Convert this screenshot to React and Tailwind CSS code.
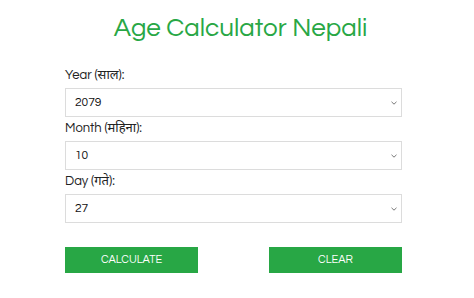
import React from "react";

const font = { fontFamily: '"Questrial", "Liberation Sans", "Noto Sans", sans-serif' };

function Chevron() {
  return (
    <svg width="6" height="4" viewBox="0 0 6 4" className="shrink-0">
      <path d="M0.5 0.8 L3 3.2 L5.5 0.8" fill="none" stroke="#777" strokeWidth="1" />
    </svg>
  );
}

function Field({ label, value }) {
  return (
    <div className="flex flex-col">
      <div className="h-[24px] flex items-center text-[13px] text-[#222]">{label}</div>
      <div className="h-[29px] border border-[#dcdcdc] bg-white flex items-center justify-between pl-[9px] pr-[4px] text-[12px] text-[#111]">
        <span>{value}</span>
        <Chevron />
      </div>
    </div>
  );
}

export default function App() {
  return (
    <div className="w-[474px] h-[298px] bg-white" style={font}>
      <div className="pt-[13px] h-[64px] text-center">
        <div className="text-[26px] leading-[30px] text-[#28a745] pl-[7px]">Age Calculator Nepali</div>
      </div>
      <div className="ml-[65px] w-[337px] flex flex-col">
        <Field label="Year (साल):" value="2079" />
        <Field label="Month (महिना):" value="10" />
        <Field label="Day (गते):" value="27" />
        <div className="mt-[24px] flex justify-between">
          <button className="w-[133px] h-[26px] bg-[#28a745] text-white text-[11px] uppercase flex items-center justify-center">Calculate</button>
          <button className="w-[133px] h-[26px] bg-[#28a745] text-white text-[11px] uppercase flex items-center justify-center">Clear</button>
        </div>
      </div>
    </div>
  );
}
